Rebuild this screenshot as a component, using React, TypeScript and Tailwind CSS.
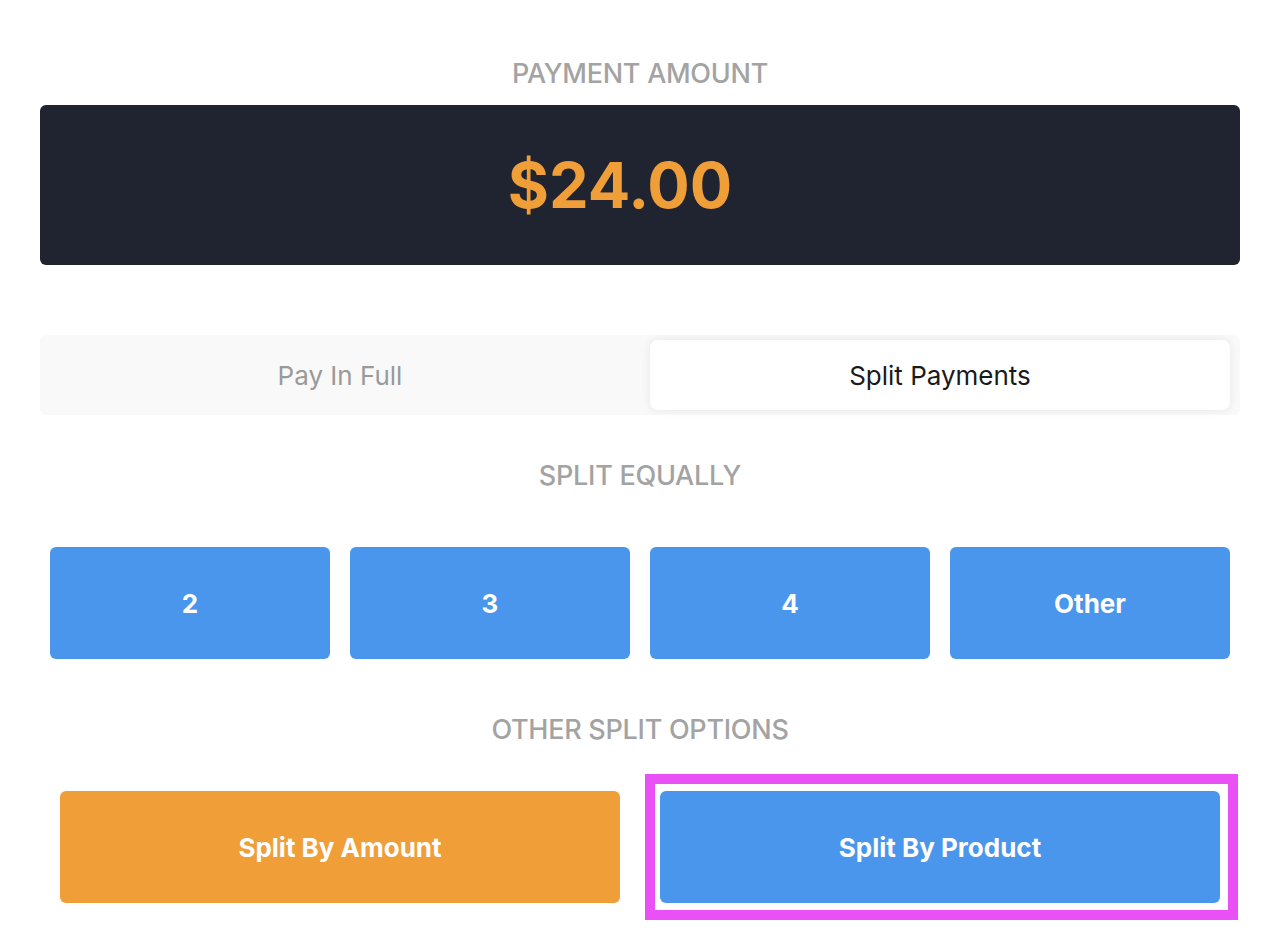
import React, { useState } from "react";

const EQUAL_SPLITS = ["2", "3", "4", "Other"];

function SectionLabel({ children }: { children: React.ReactNode }) {
  return (
    <p className="text-center text-[27px] leading-8 font-medium uppercase tracking-[-0.01em] text-[#a3a3a3]">
      {children}
    </p>
  );
}

export default function App() {
  const [mode, setMode] = useState<"full" | "split">("split");

  return (
    <div className="min-h-screen bg-white pl-10 pr-[42px] pt-[58px] font-['Inter',sans-serif]">
      <SectionLabel>Payment Amount</SectionLabel>

      <div className="mt-[15px] flex h-[160px] items-center justify-center rounded-md bg-[#1f2430] pr-10">
        <span className="text-[63px] font-bold text-[#f09e38]">$24.00</span>
      </div>

      <div className="mt-[70px] grid h-20 grid-cols-2 gap-5 rounded-md bg-[#f9f9f9] px-[10px] py-[5px]">
        <button
          type="button"
          onClick={() => setMode("full")}
          className={`rounded-lg text-[26px] ${
            mode === "full"
              ? "bg-white text-[#1a1a1a] shadow-[0_0_10px_rgba(0,0,0,0.08)]"
              : "text-[#9a9a9a]"
          }`}
        >
          Pay In Full
        </button>
        <button
          type="button"
          onClick={() => setMode("split")}
          className={`rounded-lg text-[26px] ${
            mode === "split"
              ? "bg-white text-[#1a1a1a] shadow-[0_0_10px_rgba(0,0,0,0.08)]"
              : "text-[#9a9a9a]"
          }`}
        >
          Split Payments
        </button>
      </div>

      <div className="mt-[45px]">
        <SectionLabel>Split Equally</SectionLabel>
      </div>

      <div className="mt-[55px] grid grid-cols-4 gap-5 px-[10px]">
        {EQUAL_SPLITS.map((label) => (
          <button
            key={label}
            type="button"
            className="h-[112px] rounded-md bg-[#4a96ec] text-[26px] font-bold text-white"
          >
            {label}
          </button>
        ))}
      </div>

      <div className="mt-[55px]">
        <SectionLabel>Other Split Options</SectionLabel>
      </div>

      <div className="mt-[45px] grid grid-cols-2">
        <div className="px-5">
          <button
            type="button"
            className="h-[112px] w-full rounded-md bg-[#f09e38] text-[26px] font-bold text-white"
          >
            Split By Amount
          </button>
        </div>
        <div className="px-5">
          <div className="relative">
            <button
              type="button"
              className="h-[112px] w-full rounded-md bg-[#4a96ec] text-[26px] font-bold text-white"
            >
              Split By Product
            </button>
            <div className="pointer-events-none absolute -top-[17px] -left-[15px] -right-[18px] -bottom-[17px] border-[10px] border-[#e950f5]" />
          </div>
        </div>
      </div>
    </div>
  );
}
